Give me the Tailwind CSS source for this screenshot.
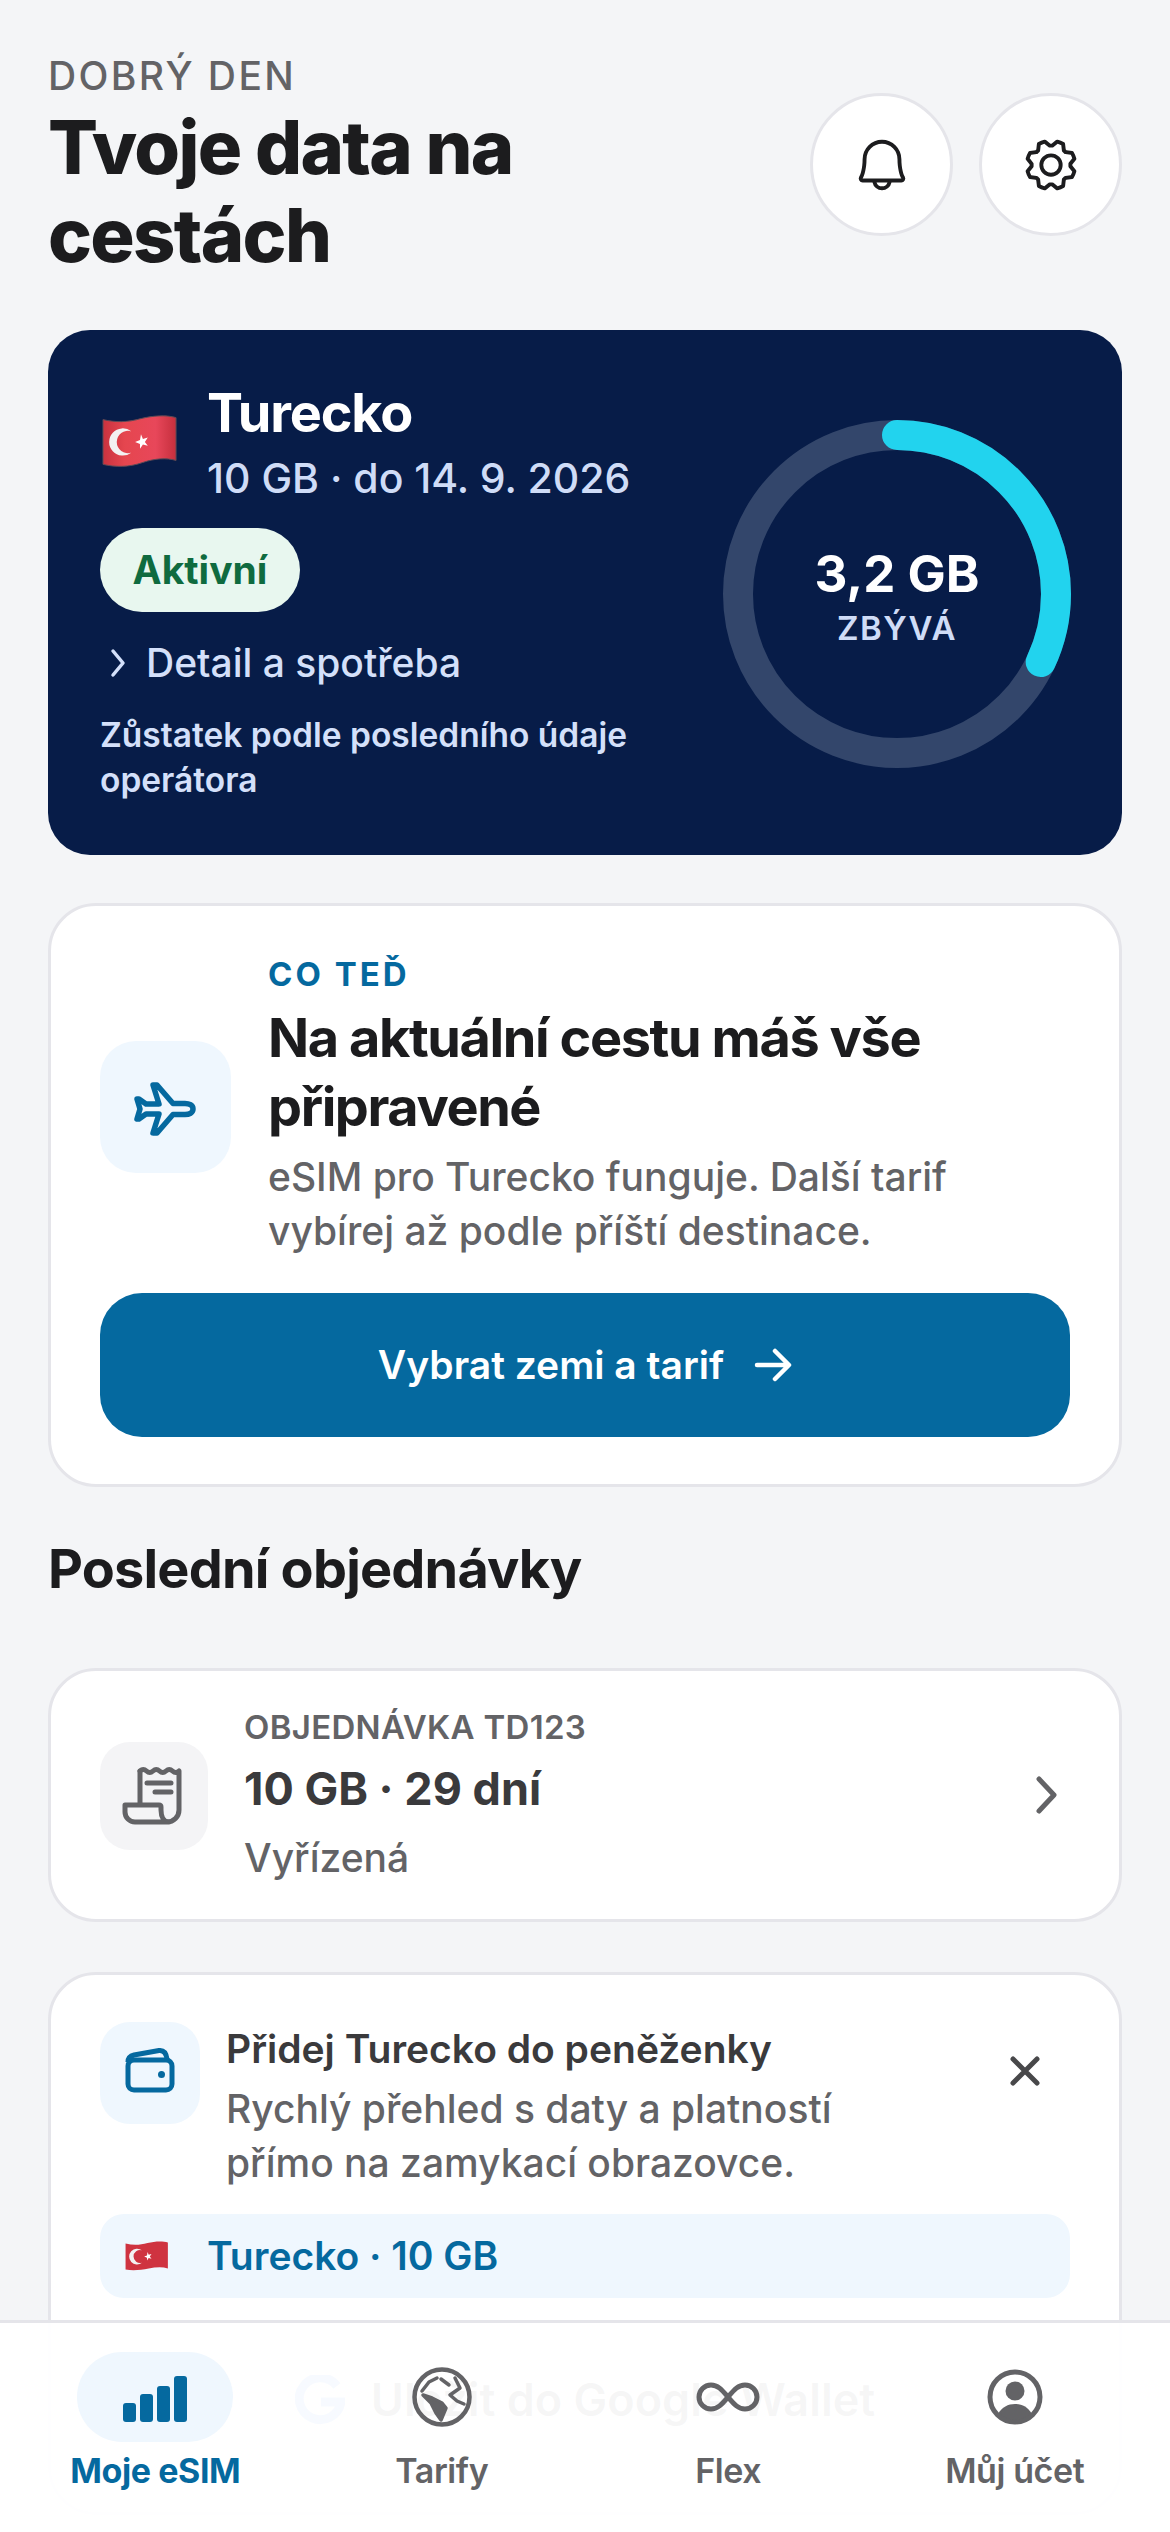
<!DOCTYPE html>
<html lang="cs">
<head>
    <meta charset="UTF-8">
    <meta name="viewport" content="width=device-width, initial-scale=1.0">
    <title>Moje eSIM</title>
    <script src="https://cdn.jsdelivr.net/npm/@tailwindcss/browser@4"></script>
</head>
<body class="bg-[#f4f5f7] font-['Inter',sans-serif] text-[#1c1c1e]">
<div class="relative w-[1170px] h-[2532px] overflow-hidden">
    <main class="px-[48px] pt-[52px]">
        <!-- header -->
        <header class="flex justify-between">
            <div>
                <p class="text-[39px] leading-[48px] font-medium tracking-[2.4px] text-[#636366]">DOBRÝ DEN</p>
                <h1 class="mt-[3px] w-[600px] text-[74px] leading-[88px] font-extrabold tracking-[-1.7px]">Tvoje data na cestách</h1>
            </div>
            <div class="mt-[41px] flex gap-[26px]">
                <button class="w-[143px] h-[143px] rounded-full bg-white border-[3px] border-[#e5e5ea] flex items-center justify-center">
                    <svg width="62" height="62" viewBox="0 0 256 256" fill="#1c1c1e"><path d="M221.8,175.94C216.25,166.38,208,139.33,208,104a80,80,0,1,0-160,0c0,35.34-8.26,62.38-13.81,71.94A16,16,0,0,0,48,200H88.81a40,40,0,0,0,78.38,0H208a16,16,0,0,0,13.8-24.06ZM128,216a24,24,0,0,1-22.62-16h45.24A24,24,0,0,1,128,216ZM48,184c7.7-13.24,16-43.92,16-80a64,64,0,1,1,128,0c0,36.05,8.28,66.73,16,80Z"/></svg>
                </button>
                <button class="w-[143px] h-[143px] rounded-full bg-white border-[3px] border-[#e5e5ea] flex items-center justify-center">
                    <svg width="62" height="62" viewBox="0 0 256 256" fill="#1c1c1e"><path d="M128,80a48,48,0,1,0,48,48A48.05,48.05,0,0,0,128,80Zm0,80a32,32,0,1,1,32-32A32,32,0,0,1,128,160Zm88-29.84q.06-2.16,0-4.32l14.92-18.64a8,8,0,0,0,1.48-7.06,107.21,107.21,0,0,0-10.88-26.25,8,8,0,0,0-6-3.93l-23.72-2.64q-1.48-1.56-3-3L186,40.54a8,8,0,0,0-3.94-6,107.71,107.71,0,0,0-26.25-10.87,8,8,0,0,0-7.06,1.49L130.16,40Q128,40,125.84,40L107.2,25.11a8,8,0,0,0-7.06-1.48A107.6,107.6,0,0,0,73.89,34.51a8,8,0,0,0-3.93,6L67.32,64.27q-1.56,1.49-3,3L40.54,70a8,8,0,0,0-6,3.94,107.71,107.71,0,0,0-10.87,26.25,8,8,0,0,0,1.49,7.06L40,125.84Q40,128,40,130.16L25.11,148.8a8,8,0,0,0-1.48,7.06,107.21,107.21,0,0,0,10.88,26.25,8,8,0,0,0,6,3.93l23.72,2.64q1.49,1.56,3,3L70,215.46a8,8,0,0,0,3.94,6,107.71,107.71,0,0,0,26.25,10.87,8,8,0,0,0,7.06-1.49L125.84,216q2.16.06,4.32,0l18.64,14.92a8,8,0,0,0,7.06,1.48,107.21,107.21,0,0,0,26.25-10.88,8,8,0,0,0,3.93-6l2.64-23.72q1.56-1.48,3-3L215.46,186a8,8,0,0,0,6-3.94,107.71,107.71,0,0,0,10.87-26.25,8,8,0,0,0-1.49-7.06Zm-16.1-6.5a73.93,73.93,0,0,1,0,8.68,8,8,0,0,0,1.74,5.48l14.19,17.73a91.57,91.57,0,0,1-6.23,15L187,173.11a8,8,0,0,0-5.1,2.64,74.11,74.11,0,0,1-6.14,6.14,8,8,0,0,0-2.64,5.1l-2.51,22.58a91.32,91.32,0,0,1-15,6.23l-17.74-14.19a8,8,0,0,0-5-1.75h-.48a73.93,73.93,0,0,1-8.68,0,8,8,0,0,0-5.48,1.74L100.45,215.8a91.57,91.57,0,0,1-15-6.23L82.89,187a8,8,0,0,0-2.64-5.1,74.11,74.11,0,0,1-6.14-6.14,8,8,0,0,0-5.1-2.64L46.43,170.6a91.32,91.32,0,0,1-6.23-15l14.19-17.74a8,8,0,0,0,1.74-5.48,73.93,73.93,0,0,1,0-8.68,8,8,0,0,0-1.74-5.48L40.2,100.45a91.57,91.57,0,0,1,6.23-15L69,82.89a8,8,0,0,0,5.1-2.64,74.11,74.11,0,0,1,6.14-6.14A8,8,0,0,0,82.89,69l2.51-22.57a91.32,91.32,0,0,1,15-6.23l17.74,14.19a8,8,0,0,0,5.48,1.74,73.93,73.93,0,0,1,8.68,0,8,8,0,0,0,5.48-1.74L155.55,40.2a91.57,91.57,0,0,1,15,6.23L173.11,69a8,8,0,0,0,2.64,5.1,74.11,74.11,0,0,1,6.14,6.14,8,8,0,0,0,5.1,2.64l22.58,2.51a91.32,91.32,0,0,1,6.23,15l-14.19,17.74A8,8,0,0,0,199.87,123.66Z"/></svg>
                </button>
            </div>
        </header>

        <!-- active esim -->
        <section class="mt-[51px] h-[525px] rounded-[42px] bg-[#071c48] pl-[52px] pr-[51px] pt-[53px] flex justify-between">
            <div class="w-[620px]">
                <div class="flex items-center gap-[29px]">
                    <svg width="76" height="56" viewBox="0 0 78 56" class="ml-[2px] -mt-[6px]">
                        <defs>
                            <linearGradient id="flagBig" x1="0" x2="1" y1="0" y2="0">
                                <stop offset="0" stop-color="#c9323f"/><stop offset="0.3" stop-color="#e5464f"/><stop offset="0.72" stop-color="#e8475a"/><stop offset="1" stop-color="#c52f3d"/>
                            </linearGradient>
                        </defs>
                        <path d="M1 6 C14 9 26 9 40 5 C52 2 66 1 76 4 V48 C66 45 54 46 42 50 C28 55 14 55 1 52 Z" fill="url(#flagBig)" stroke="#5a4a55" stroke-width="1"/>
                        <path d="M30 18 A14 14 0 1 0 30 40 A11.5 11.5 0 1 1 30 18 Z" fill="#f3f1f2"/>
                        <polygon points="40,21 42,26 47,24.5 44,29 47,33 42,31.5 39,36 39,31 34,29 39,27" fill="#fff"/>
                    </svg>
                    <div>
                        <h2 class="text-[54px] leading-[60px] font-bold tracking-[-1.2px] text-white">Turecko</h2>
                        <p class="mt-[8px] text-[41px] leading-[54px] font-medium text-[#cfdcf7]">10 GB · do 14. 9. 2026</p>
                    </div>
                </div>
                <span class="mt-[23px] h-[84px] w-[200px] rounded-full bg-[#e8f7ef] flex items-center justify-center text-[39px] font-bold text-[#0f6b3f]">Aktivní</span>
                <a class="mt-[24px] flex items-center gap-[20px] text-[39px] leading-[54px] font-medium text-[#d4e0fa]">
                    <svg width="16" height="30" viewBox="0 0 16 30" fill="none" stroke="#d4e0fa" stroke-width="3.5" stroke-linecap="round" stroke-linejoin="round" class="ml-[10px]"><path d="M3 3 L13 15 L3 27"/></svg>
                    Detail a spotřeba
                </a>
                <p class="mt-[23px] w-[600px] text-[33.5px] leading-[45px] font-semibold text-[#d4e0fa]">Zůstatek podle posledního údaje operátora</p>
            </div>
            <div class="relative w-[348px] h-[348px] mt-[37px] shrink-0">
                <svg width="348" height="348" viewBox="0 0 348 348" fill="none">
                    <circle cx="174" cy="174" r="159" stroke="#33466b" stroke-width="30"/>
                    <circle cx="174" cy="174" r="159" stroke="#22d3ee" stroke-width="30" stroke-linecap="round" stroke-dasharray="320 1000" transform="rotate(-90 174 174)"/>
                </svg>
                <div class="absolute inset-0 pt-[4px] flex flex-col items-center justify-center">
                    <span class="text-[51px] leading-[60px] font-bold text-white">3,2 GB</span>
                    <span class="mt-[4px] text-[33px] leading-[40px] font-semibold tracking-[1.5px] text-[#cfdcf7]">ZBÝVÁ</span>
                </div>
            </div>
        </section>

        <!-- next step -->
        <section class="mt-[48px] h-[584px] rounded-[48px] bg-white border-[3px] border-[#e5e5ea] px-[49px] pt-[47px]">
            <div class="flex items-center gap-[37px]">
                <div class="w-[131px] h-[132px] mt-[2px] shrink-0 rounded-[36px] bg-[#eff7fe] flex items-center justify-center">
                    <svg width="90" height="90" viewBox="0 -2 90 90" fill="none" stroke="#05699f" stroke-width="5.5" stroke-linejoin="round"><path d="M72 45 C72 41 68 39.5 64 39.5 L52 39.5 L36 21 L32 21 L38 40 L25 40 L18 35 L16 35 L19 45 L16 55 L18 55 L25 50 L38 50 L32 69 L36 69 L52 50.5 L64 50.5 C68 50.5 72 49 72 45 Z"/></svg>
                </div>
                <div>
                    <p class="text-[33px] leading-[42px] font-bold tracking-[3px] text-[#05699f]">CO TEĎ</p>
                    <h2 class="mt-[8px] text-[54px] leading-[69px] font-bold tracking-[-1.4px]">Na aktuální cestu máš vše připravené</h2>
                    <p class="mt-[9px] text-[39px] leading-[54px] font-medium text-[#636366]">eSIM pro Turecko funguje. Další tarif vybírej až podle příští destinace.</p>
                </div>
            </div>
            <button class="mt-[35px] w-full h-[144px] rounded-[42px] bg-[#05699f] text-white text-[39px] font-semibold flex items-center justify-center gap-[30px]">
                Vybrat zemi a tarif
                <svg width="38" height="38" viewBox="0 0 38 38" fill="none" stroke="#fff" stroke-width="4.5" stroke-linecap="round" stroke-linejoin="round"><path d="M3 19 H34 M21 5 L35 19 L21 33"/></svg>
            </button>
        </section>

        <!-- orders -->
        <h2 class="mt-[49px] text-[54px] leading-[66px] font-bold tracking-[-0.8px]">Poslední objednávky</h2>
        <a class="mt-[66px] h-[254px] rounded-[48px] bg-white border-[3px] border-[#e5e5ea] pl-[49px] pr-[60px] flex items-center justify-between">
            <div class="flex items-center gap-[36px]">
                <div class="w-[108px] h-[108px] mt-[2px] rounded-[30px] bg-[#f4f4f6] flex items-center justify-center">
                    <svg width="90" height="80" viewBox="0 0 90 80" fill="none" stroke="#636366" stroke-width="5" stroke-linecap="round" stroke-linejoin="round">
                        <path d="M31 15 q3.25 -3 6.5 0 q3.25 3 6.5 0 q3.25 -3 6.5 0 q3.25 3 6.5 0 q3.25 -3 6.5 0 q3.25 3 6.5 0 V54 a12 12 0 0 1 -12 12 H26 a10 10 0 0 1 -10 -10 V49 H50 q2 0 2 2 V54 c0 7 3 12 8 12"/>
                        <path d="M31 15 V48 M38 27 H62 M46 36 H62"/>
                    </svg>
                </div>
                <div>
                    <p class="text-[33px] leading-[42px] font-semibold tracking-[0.3px] text-[#636366]">OBJEDNÁVKA TD123</p>
                    <p class="mt-[11px] text-[45px] leading-[60px] font-bold text-[#3a3a3c]">10 GB · 29 dní</p>
                    <p class="mt-[12px] text-[39px] leading-[54px] font-medium text-[#636366]">Vyřízená</p>
                </div>
            </div>
            <svg width="24" height="40" viewBox="0 0 24 40" fill="none" stroke="#636366" stroke-width="5" stroke-linecap="round" stroke-linejoin="round"><path d="M4 4 L19 20 L4 36"/></svg>
        </a>

        <!-- wallet -->
        <section class="mt-[50px] rounded-[48px] bg-white border-[3px] border-[#e5e5ea] px-[49px] pt-[47px] pb-[40px]">
            <div class="flex items-start gap-[26px]">
                <div class="w-[100px] h-[102px] shrink-0 rounded-[30px] bg-[#eff7fe] flex items-center justify-center">
                    <svg width="80" height="80" viewBox="0 0 80 80" fill="none" stroke="#05699f" stroke-width="5" stroke-linejoin="round">
                        <rect x="18" y="27" width="44" height="30" rx="6"/>
                        <path d="M18 29 C18 25 20 23 24 22 L49 17.5 C53 17 56 19 57 26"/>
                        <circle cx="51.5" cy="41.5" r="3.5" fill="#05699f" stroke="none"/>
                    </svg>
                </div>
                <div class="flex-1 mt-[3px]">
                    <p class="text-[39px] leading-[48px] font-semibold text-[#3a3a3c]">Přidej Turecko do peněženky</p>
                    <p class="mt-[9px] w-[640px] text-[39px] leading-[54px] font-medium text-[#636366]">Rychlý přehled s daty a platností přímo na zamykací obrazovce.</p>
                </div>
                <svg width="32" height="32" viewBox="0 0 32 32" fill="none" stroke="#48484a" stroke-width="5" stroke-linecap="round" class="mt-[33px] mr-[29px]"><path d="M4 4 L28 28 M28 4 L4 28"/></svg>
            </div>
            <div class="mt-[24px] h-[84px] rounded-[24px] bg-[#eff7fe] pl-[25px] flex items-center gap-[38px] text-[39px] font-semibold text-[#05699f]">
                <svg width="44" height="32" viewBox="0 0 78 56">
                    <path d="M1 6 C14 9 26 9 40 5 C52 2 66 1 76 4 V50 C66 47 54 48 42 50 C28 53 14 54 1 52 Z" fill="#cf3340"/>
                    <path d="M30 18 A14 14 0 1 0 30 40 A11.5 11.5 0 1 1 30 18 Z" fill="#f3f1f2"/>
                    <polygon points="40,21 42,26 47,24.5 44,29 47,33 42,31.5 39,36 39,31 34,29 39,27" fill="#fff"/>
                </svg>
                Turecko · 10 GB
            </div>
            <button class="mt-[30px] w-full h-[144px] flex items-center justify-center gap-[26px] text-[45px] font-semibold text-[#1c1c1e]">
                <svg width="50" height="50" viewBox="0 0 50 50" fill="none" stroke="#4285f4" stroke-width="9"><path d="M42 11 A21 21 0 1 0 46 27 H26"/></svg>
                Uložit do Google Wallet
            </button>
        </section>
    </main>

    <!-- tab bar sits over the scrolled content -->
    <nav class="absolute left-0 right-0 top-[2320px] bottom-0 bg-white/[0.96] border-t-[3px] border-[#e5e5ea] px-[12px] pt-[29px] grid grid-cols-4">
        <a class="flex flex-col items-center">
            <span class="w-[156px] h-[90px] rounded-full bg-[#eff7fe] flex items-end justify-center gap-[4px] pb-[20px]">
                <i class="block w-[13px] h-[19px] rounded-[3px] bg-[#05699f]"></i>
                <i class="block w-[13px] h-[28px] rounded-[3px] bg-[#05699f]"></i>
                <i class="block w-[13px] h-[36px] rounded-[3px] bg-[#05699f]"></i>
                <i class="block w-[13px] h-[46px] rounded-[3px] bg-[#05699f]"></i>
            </span>
            <span class="mt-[7px] text-[34px] leading-[44px] font-bold tracking-[-0.4px] text-[#05699f]">Moje eSIM</span>
        </a>
        <a class="flex flex-col items-center">
            <span class="h-[90px] flex items-center justify-center">
                <svg width="60" height="60" viewBox="0 0 60 60" fill="none" stroke="#636366" stroke-width="3.5" stroke-linecap="round" stroke-linejoin="round">
                    <circle cx="30" cy="30" r="27.5" stroke-width="4.5"/>
                    <path d="M25 11 L17 15 L10 24"/>
                    <path d="M29 12 L37 18"/>
                    <path d="M11 28 L20 31 L30 36 L34 41 L29 53 L24 46 L19 36 Z" fill="#636366"/>
                    <path d="M43 11 L48 21 L38 28 L45 34 L52 37"/>
                </svg>
            </span>
            <span class="mt-[7px] text-[34px] leading-[44px] font-semibold tracking-[-0.4px] text-[#636366]">Tarify</span>
        </a>
        <a class="flex flex-col items-center">
            <span class="h-[90px] flex items-center justify-center">
                <svg width="64" height="32" viewBox="0 0 64 32" fill="none" stroke="#636366" stroke-width="5"><path d="M32 16 c-6 -7 -10 -12 -17 -12 a12 12 0 0 0 0 24 c7 0 11 -5 17 -12 c6 -7 10 -12 17 -12 a12 12 0 0 1 0 24 c-7 0 -11 -5 -17 -12 Z"/></svg>
            </span>
            <span class="mt-[7px] text-[34px] leading-[44px] font-semibold tracking-[-0.4px] text-[#636366]">Flex</span>
        </a>
        <a class="flex flex-col items-center">
            <span class="h-[90px] flex items-center justify-center">
                <svg width="56" height="56" viewBox="17 17 56 56" fill="#636366">
                    <circle cx="45" cy="39" r="9.5"/>
                    <path d="M28 62 C32 55 38 52 45 52 C52 52 58 55 62 62 A24 24 0 0 1 28 62 Z"/>
                    <circle cx="45" cy="45" r="25" fill="none" stroke="#636366" stroke-width="5"/>
                </svg>
            </span>
            <span class="mt-[7px] text-[34px] leading-[44px] font-semibold tracking-[-0.4px] text-[#636366]">Můj účet</span>
        </a>
    </nav>
</div>
</body>
</html>
